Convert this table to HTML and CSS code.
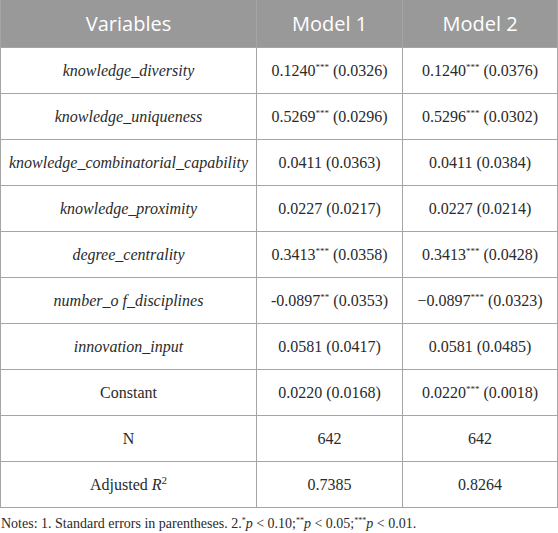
FILE: index.html
```html
<!DOCTYPE html>
<html>
<head>
<meta charset="utf-8">
<link rel="stylesheet" href="styles.css">
</head>
<body>
<table class="reg">
  <colgroup>
    <col class="c1"><col class="c2"><col class="c3">
  </colgroup>
  <thead>
    <tr><th>Variables</th><th>Model 1</th><th>Model 2</th></tr>
  </thead>
  <tbody>
    <tr><td><i>knowledge_diversity</i></td><td>0.1240<sup>***</sup> (0.0326)</td><td>0.1240<sup>***</sup> (0.0376)</td></tr>
    <tr><td><i>knowledge_uniqueness</i></td><td>0.5269<sup>***</sup> (0.0296)</td><td>0.5296<sup>***</sup> (0.0302)</td></tr>
    <tr><td><i>knowledge_combinatorial_capability</i></td><td>0.0411 (0.0363)</td><td>0.0411 (0.0384)</td></tr>
    <tr><td><i>knowledge_proximity</i></td><td>0.0227 (0.0217)</td><td>0.0227 (0.0214)</td></tr>
    <tr><td><i>degree_centrality</i></td><td>0.3413<sup>***</sup> (0.0358)</td><td>0.3413<sup>***</sup> (0.0428)</td></tr>
    <tr><td><i>number_o f_disciplines</i></td><td>-0.0897<sup>**</sup> (0.0353)</td><td>&minus;0.0897<sup>***</sup> (0.0323)</td></tr>
    <tr><td><i>innovation_input</i></td><td>0.0581 (0.0417)</td><td>0.0581 (0.0485)</td></tr>
    <tr><td>Constant</td><td>0.0220 (0.0168)</td><td>0.0220<sup>***</sup> (0.0018)</td></tr>
    <tr><td>N</td><td>642</td><td>642</td></tr>
    <tr><td>Adjusted <i>R</i><sup class="sq">2</sup></td><td>0.7385</td><td>0.8264</td></tr>
  </tbody>
</table>
<p class="notes">Notes: 1. Standard errors in parentheses. 2.<sup>*</sup><i>p</i> &lt; 0.10;<sup>**</sup><i>p</i> &lt; 0.05;<sup>***</sup><i>p</i> &lt; 0.01.</p>
</body>
</html>
```
FILE: styles.css
```css
html, body {
  margin: 0;
  padding: 0;
  background: #ffffff;
}
body {
  font-family: "Liberation Serif", "Times New Roman", serif;
  color: #2a2a2a;
}
.reg {
  border-collapse: collapse;
  width: 557px;
  table-layout: fixed;
  margin: 0;
}
.c1 { width: 256px; }
.c2 { width: 146px; }
.c3 { width: 155px; }
.reg th {
  background: #999999;
  color: #ffffff;
  font-family: "Open Sans", "Noto Sans", sans-serif;
  font-weight: 400;
  font-size: 20px;
  height: 47px;
  box-sizing: border-box;
  padding: 0;
  border: 1px solid #a5a5a5;
  border-top: none;
  text-align: center;
  vertical-align: middle;
}
.reg td {
  height: 46px;
  box-sizing: border-box;
  padding: 2px 0 0 0;
  border: 1px solid #a5a5a5;
  text-align: center;
  vertical-align: middle;
  font-size: 16px;
  line-height: 18px;
  white-space: nowrap;
}
.reg sup {
  font-size: 9px;
  vertical-align: 6px;
  line-height: 0;
  letter-spacing: 0;
}
.reg sup.sq {
  font-size: 11px;
  vertical-align: 6px;
}
.notes {
  margin: 7px 0 0 1px;
  font-size: 14px;
  line-height: 18px;
}
.notes sup {
  font-size: 8px;
  vertical-align: 5px;
  line-height: 0;
}
```
